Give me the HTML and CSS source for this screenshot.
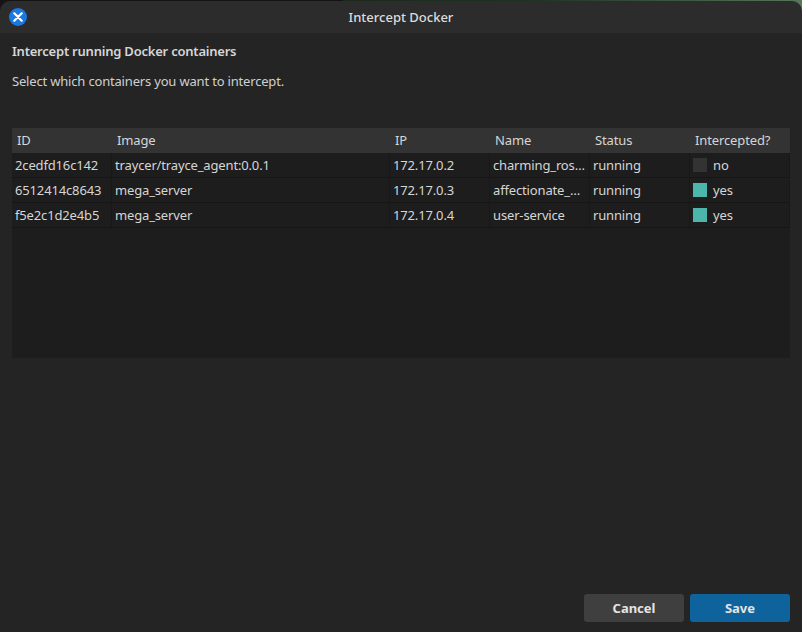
FILE: index.html
```html
<!DOCTYPE html>
<html lang="en">
<head>
<meta charset="utf-8">
<title>Intercept Docker</title>
<link rel="stylesheet" href="styles.css">
</head>
<body>
<div class="window">
  <header class="titlebar">
    <span class="close">
      <svg viewBox="0 0 10 10" width="10" height="10"><path d="M1.3 1.3 8.7 8.7M8.7 1.3 1.3 8.7" stroke="#fff" stroke-width="2.2" stroke-linecap="round" fill="none"/></svg>
    </span>
    <span class="title">Intercept Docker</span>
  </header>
  <main class="content">
    <h1 class="heading">Intercept running Docker containers</h1>
    <p class="lead">Select which containers you want to intercept.</p>
    <div class="table">
      <div class="row head">
        <div class="cell">ID</div><div class="cell">Image</div><div class="cell">IP</div><div class="cell">Name</div><div class="cell">Status</div><div class="cell">Intercepted?</div>
      </div>
      <div class="row">
        <div class="cell">2cedfd16c142</div><div class="cell">traycer/trayce_agent:0.0.1</div><div class="cell">172.17.0.2</div><div class="cell">charming_ros…</div><div class="cell">running</div>
        <div class="cell check"><span class="box"></span><span>no</span></div>
      </div>
      <div class="row">
        <div class="cell">6512414c8643</div><div class="cell">mega_server</div><div class="cell">172.17.0.3</div><div class="cell">affectionate_…</div><div class="cell">running</div>
        <div class="cell check"><span class="box on"></span><span>yes</span></div>
      </div>
      <div class="row">
        <div class="cell">f5e2c1d2e4b5</div><div class="cell">mega_server</div><div class="cell">172.17.0.4</div><div class="cell">user-service</div><div class="cell">running</div>
        <div class="cell check"><span class="box on"></span><span>yes</span></div>
      </div>
    </div>
    <footer class="actions">
      <button class="btn cancel">Cancel</button>
      <button class="btn save">Save</button>
    </footer>
  </main>
</div>
</body>
</html>
```
FILE: styles.css
```css
* { box-sizing: border-box; }
html, body { margin: 0; height: 100%; }
html { background: linear-gradient(to right, #141414 343px, #1a2a1c 343px, #1f3222 530px, #55775a 100%); }
body { font-family: "Noto Sans", sans-serif; font-size: 13px; color: #d6d6d6; overflow: hidden; }
.window { height: 632px; padding-top: 1px; display: flex; flex-direction: column; }
.titlebar { height: 32px; flex: none; background: #2c2c2c; border-radius: 10px 10px 0 0; display: flex; align-items: center; justify-content: center; padding-bottom: 1px; }
.close { width: 18px; height: 18px; border-radius: 50%; background: #1a78e0; display: flex; align-items: center; justify-content: center; margin: 0 -27px 0 9px; }
.title { flex: 1; text-align: center; font-weight: 500; color: #dcdcdc; }
.content { flex: 1; background: #242424; padding: 9px 12px 10px; display: flex; flex-direction: column; }
.heading { margin: 0; font-size: 13px; line-height: 18px; font-weight: 600; letter-spacing: -0.22px; color: #d6d6d6; }
.lead { margin: 12px 0 0; line-height: 18px; letter-spacing: -0.18px; color: #d0d0d0; }
.table { margin-top: 38px; height: 230px; background: #1d1d1d; flex: none; letter-spacing: -0.15px; }
.row { display: grid; grid-template-columns: 100px 278px 100px 100px 100px 100px; height: 25px; border-bottom: 1px solid #161616; }
.head { background: #333333; border-bottom: 0; letter-spacing: -0.12px; }
.cell { padding: 0 3px; line-height: 24px; white-space: nowrap; border-right: 1px solid #181818; }
.head .cell { padding-left: 5px; line-height: 25px; border-right: 0; }
.check { display: flex; align-items: center; gap: 6px; }
.box { width: 14px; height: 14px; background: #333333; flex: none; }
.box.on { background: #4db6ac; }
.actions { margin-top: auto; display: flex; justify-content: flex-end; gap: 6px; }
.btn { width: 100px; height: 28px; border: 0; border-radius: 3px; font-family: inherit; font-size: 13px; font-weight: 700; color: #e4e4e4; padding: 0; }
.cancel { background: #3f3f3f; }
.save { background: #0e639c; }
```
